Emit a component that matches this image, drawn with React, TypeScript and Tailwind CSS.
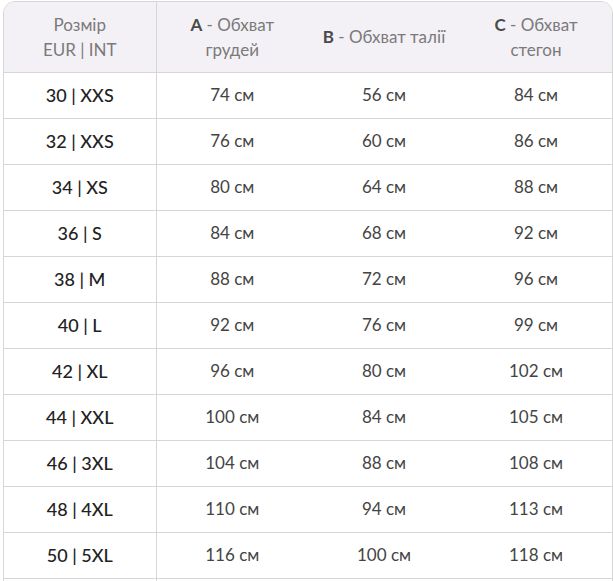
import React from "react";

const rows: [string, string, string, string][] = [
  ["30 | XXS", "74 см", "56 см", "84 см"],
  ["32 | XXS", "76 см", "60 см", "86 см"],
  ["34 | XS", "80 см", "64 см", "88 см"],
  ["36 | S", "84 см", "68 см", "92 см"],
  ["38 | M", "88 см", "72 см", "96 см"],
  ["40 | L", "92 см", "76 см", "99 см"],
  ["42 | XL", "96 см", "80 см", "102 см"],
  ["44 | XXL", "100 см", "84 см", "105 см"],
  ["46 | 3XL", "104 см", "88 см", "108 см"],
  ["48 | 4XL", "110 см", "94 см", "113 см"],
  ["50 | 5XL", "116 см", "100 см", "118 см"],
];

export default function App() {
  return (
    <div
      className="min-h-screen bg-white pl-[3px] pt-px"
      style={{ fontFamily: "Lato, 'Open Sans', sans-serif" }}
    >
      <div className="w-[610px] overflow-hidden rounded-t-[12px] border border-[#d6d6d6]">
        <table className="w-full table-fixed border-collapse text-center">
          <thead>
            <tr className="h-[70px] bg-[#f3f1f5] text-[17px] leading-[25px] text-[#7a7a7a]">
              <th className="border-r border-[#d6d6d6] font-normal">
                Розмір
                <br />
                EUR | INT
              </th>
              <th className="font-normal">
                <span className="font-bold text-[#4a4a4a]">A</span> - Обхват
                <br />
                грудей
              </th>
              <th className="font-normal">
                <span className="font-bold text-[#4a4a4a]">B</span> - Обхват талії
              </th>
              <th className="font-normal">
                <span className="font-bold text-[#4a4a4a]">C</span> - Обхват
                <br />
                стегон
              </th>
            </tr>
          </thead>
          <tbody>
            {rows.map((r) => (
              <tr key={r[0]} className="h-[46px] border-t border-[#d6d6d6]">
                <td className="border-r border-[#d6d6d6] text-[18px] font-medium text-[#222]">
                  {r[0]}
                </td>
                <td className="text-[17px] text-[#444]">{r[1]}</td>
                <td className="text-[17px] text-[#444]">{r[2]}</td>
                <td className="text-[17px] text-[#444]">{r[3]}</td>
              </tr>
            ))}
            <tr className="h-[46px] border-t border-[#d6d6d6]">
              <td className="border-r border-[#d6d6d6]" />
              <td />
              <td />
              <td />
            </tr>
          </tbody>
        </table>
      </div>
    </div>
  );
}
